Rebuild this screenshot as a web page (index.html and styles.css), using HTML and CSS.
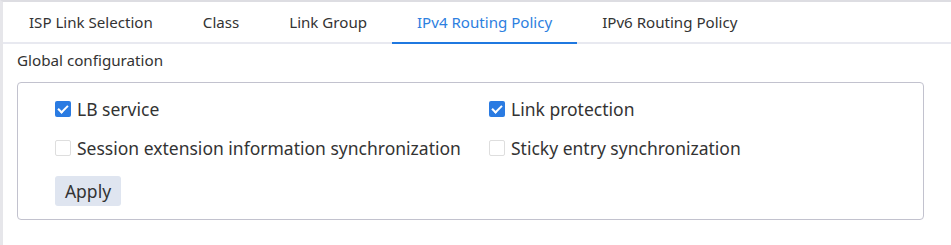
FILE: index.html
```html
<!DOCTYPE html>
<html>
<head>
    <title>IPv4 Routing Policy</title>
    <link rel="stylesheet" href="styles.css">
</head>
<body>
    <div id="page">
        <div class="tabs">
            <div class="tab">ISP Link Selection</div>
            <div class="tab">Class</div>
            <div class="tab">Link Group</div>
            <div class="tab active">IPv4 Routing Policy</div>
            <div class="tab">IPv6 Routing Policy</div>
        </div>
        <div class="section-title">Global configuration</div>
        <div class="panel">
            <div class="grid">
                <label class="check-item"><span class="box checked"></span>LB service</label>
                <label class="check-item"><span class="box checked"></span>Link protection</label>
                <label class="check-item"><span class="box"></span>Session extension information synchronization</label>
                <label class="check-item"><span class="box"></span>Sticky entry synchronization</label>
            </div>
            <button class="apply">Apply</button>
        </div>
    </div>
</body>
</html>
```
FILE: styles.css
```css
body{
    margin:0;
    font-family:"Noto Sans", "Open Sans", sans-serif;
    color:#333;
    background:white;
}

#page{
    height:243px;
    border-top:2px solid #dddde2;
    border-left:3px solid #e6e6ea;
}

.tabs{
    display:flex;
    height:40px;
    padding-left:1px;
    border-bottom:2px solid #e8e9f0;
}

.tab{
    padding:0 25px;
    line-height:40px;
    font-size:15.1px;
    border-bottom:2px solid transparent;
    margin-bottom:-2px;
}

.tab.active{
    color:#2d80e0;
    border-bottom-color:#1f78e0;
}

.section-title{
    padding:5px 0 0 14px;
    line-height:22px;
    font-size:15.2px;
}

.panel{
    width:907px;
    margin:11px 0 0 14px;
    padding:14px 0 12px 37px;
    box-sizing:border-box;
    height:138px;
    border:1px solid #c2c2ce;
    border-radius:4px;
}

.grid{
    display:grid;
    grid-template-columns:434px auto;
    row-gap:15px;
}

.check-item{
    display:flex;
    align-items:center;
    height:24px;
    font-size:17.5px;
}

.box{
    width:16px;
    height:16px;
    margin-right:6px;
    box-sizing:border-box;
    border:1px solid #dedede;
    border-radius:2px;
    background:white;
}

.box.checked{
    border:none;
    background:#2a7be2;
    position:relative;
}

.box.checked:after{
    content:"";
    position:absolute;
    left:5px;
    top:2px;
    width:4px;
    height:8px;
    border:solid white;
    border-width:0 2px 2px 0;
    transform:rotate(45deg);
}

.apply{
    display:block;
    margin-top:16px;
    width:66px;
    height:30px;
    border:none;
    border-radius:3px;
    background:#dfe5f0;
    color:#333;
    font-family:inherit;
    font-size:17.5px;
    padding:0;
}
```
